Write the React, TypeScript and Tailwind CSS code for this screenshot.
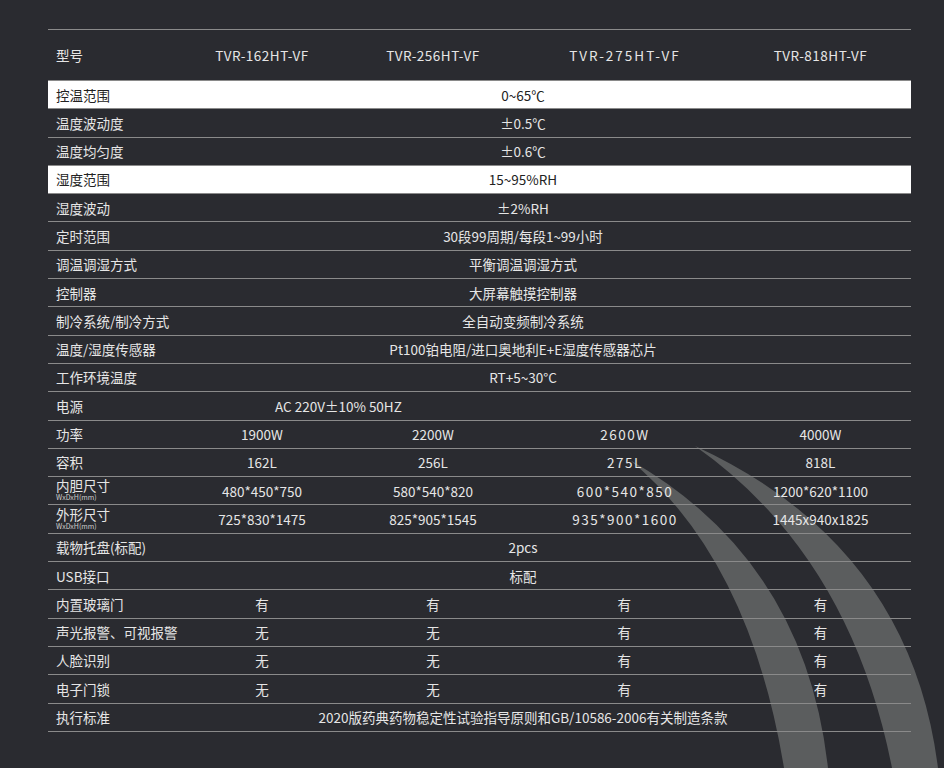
const font = { fontFamily: '"Noto Sans CJK SC", "Noto Sans", sans-serif' }

type Row = { label: string; sub?: boolean; white?: boolean; span?: string; left?: string; cells?: string[] }

const rows: Row[] = [
  { label: "控温范围", white: true, span: "0~65℃" },
  { label: "温度波动度", span: "±0.5℃" },
  { label: "温度均匀度", span: "±0.6℃" },
  { label: "湿度范围", white: true, span: "15~95%RH" },
  { label: "湿度波动", span: "±2%RH" },
  { label: "定时范围", span: "30段99周期/每段1~99小时" },
  { label: "调温调湿方式", span: "平衡调温调湿方式" },
  { label: "控制器", span: "大屏幕触摸控制器" },
  { label: "制冷系统/制冷方式", span: "全自动变频制冷系统" },
  { label: "温度/湿度传感器", span: "Pt100铂电阻/进口奥地利E+E湿度传感器芯片" },
  { label: "工作环境温度", span: "RT+5~30°C" },
  { label: "电源", left: "AC 220V±10% 50HZ" },
  { label: "功率", cells: ["1900W", "2200W", "2600W", "4000W"] },
  { label: "容积", cells: ["162L", "256L", "275L", "818L"] },
  { label: "内胆尺寸", sub: true, cells: ["480*450*750", "580*540*820", "600*540*850", "1200*620*1100"] },
  { label: "外形尺寸", sub: true, cells: ["725*830*1475", "825*905*1545", "935*900*1600", "1445x940x1825"] },
  { label: "载物托盘(标配)", span: "2pcs" },
  { label: "USB接口", span: "标配" },
  { label: "内置玻璃门", cells: ["有", "有", "有", "有"] },
  { label: "声光报警、可视报警", cells: ["无", "无", "有", "有"] },
  { label: "人脸识别", cells: ["无", "无", "有", "有"] },
  { label: "电子门锁", cells: ["无", "无", "有", "有"] },
  { label: "执行标准", span: "2020版药典药物稳定性试验指导原则和GB/10586-2006有关制造条款" },
]

const colW = ["w-[168px]", "w-[174px]", "w-[210px]", "w-[181px]"]
const wide = [false, false, true, false]

export default function App() {
  return (
    <div className="relative w-[944px] h-[768px] overflow-hidden bg-[#2a2b30] text-[13.5px] text-[#e6e6e6]" style={font}>
      <svg className="absolute inset-0" width="944" height="768">
        <path d="M630 460 Q805 560 828 768 L784 768 Q750 560 630 460 Z" fill="#5b5d5e" />
        <path d="M695 446 Q910 545 938 768 L892 768 Q850 555 695 446 Z" fill="#5b5d5e" />
      </svg>
      <div className="relative ml-[48px] mt-[29px] w-[863px] border-t border-[#8a8a8a]">
        <div className="flex items-center h-[51px] border-b border-[#8a8a8a]">
          <div className="w-[130px] pl-2">型号</div>
          {["TVR-162HT-VF", "TVR-256HT-VF", "TVR-275HT-VF", "TVR-818HT-VF"].map((t, i) => (
            <div key={t} className={`${colW[i]} text-center ${i === 2 ? "tracking-[2px]" : "tracking-[0.5px]"}`}>{t}</div>
          ))}
        </div>
        {rows.map((r) => (
          <div
            key={r.label}
            className={`flex items-center h-[28.3px] border-b border-[#8a8a8a] ${r.white ? "bg-white text-[#222]" : ""}`}
          >
            <div className="w-[130px] pl-2">
              <div className={r.sub ? "leading-[15px] -mt-[2px]" : ""}>{r.label}</div>
              {r.sub && <div className="text-[7px] leading-[8px] text-[#cfcfcf]">WxDxH(mm)</div>}
            </div>
            {r.span && <div className="flex-1 text-center pr-[43px]">{r.span}</div>}
            {r.left && <div className="flex-1 pl-[97px]">{r.left}</div>}
            {r.cells &&
              r.cells.map((c, i) => (
                <div key={i} className={`${colW[i]} text-center ${wide[i] ? "tracking-[1.5px]" : ""}`}>{c}</div>
              ))}
          </div>
        ))}
      </div>
    </div>
  )
}
